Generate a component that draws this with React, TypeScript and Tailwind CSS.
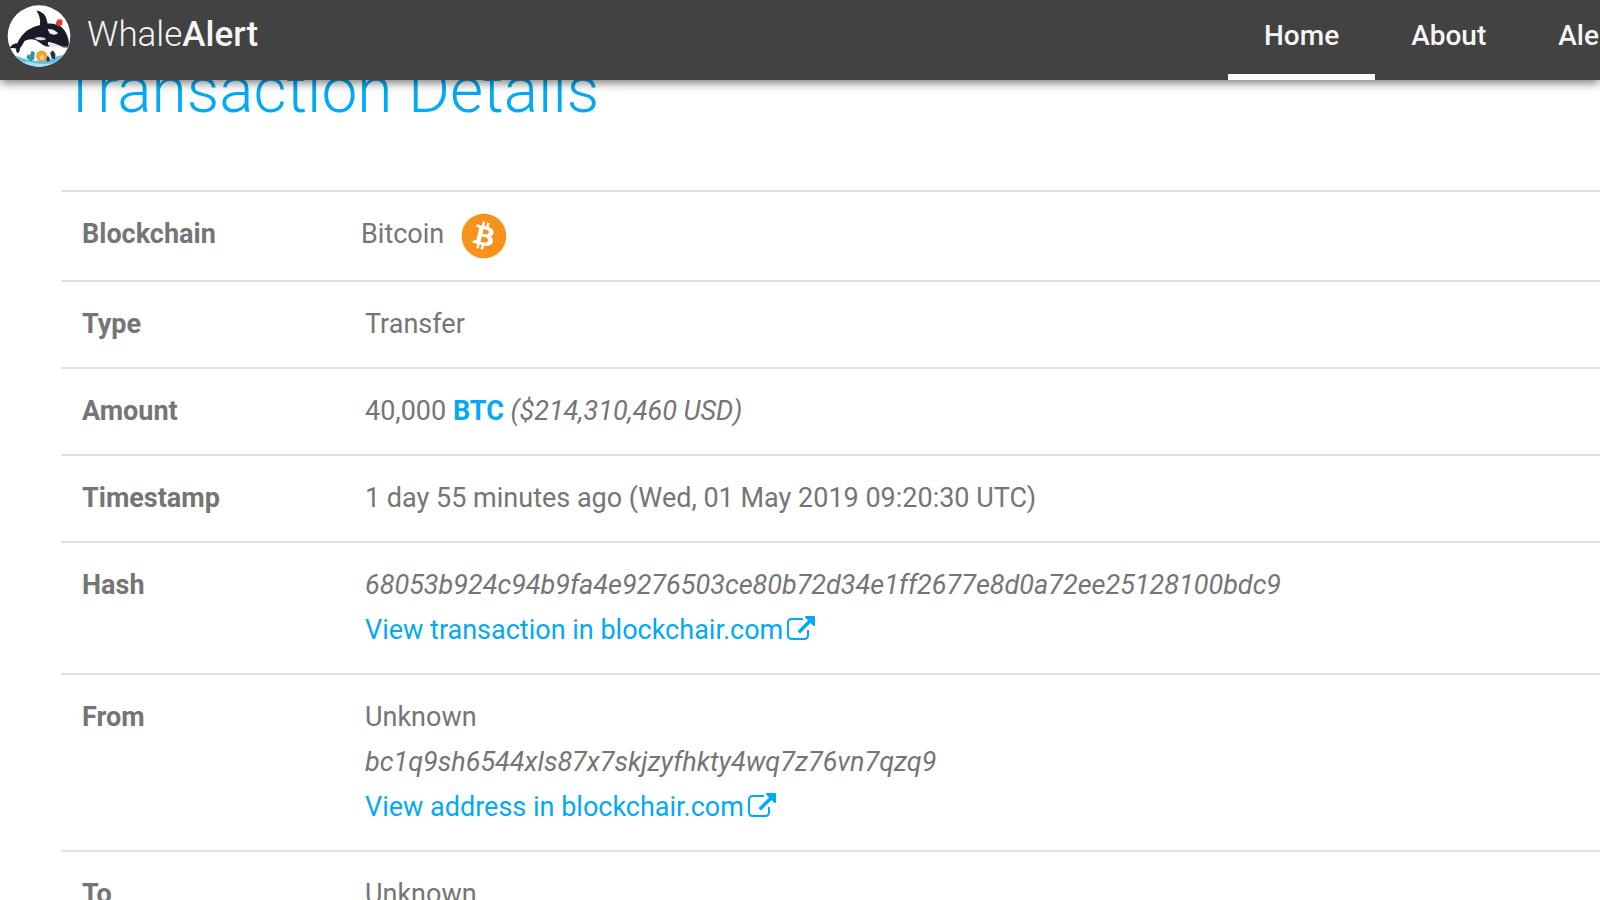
import type { ReactNode } from "react";
import { FaBitcoin } from "react-icons/fa";

function WhaleLogo() {
  return (
    <svg viewBox="22 15 192 188" className="h-[62px] w-16 shrink-0" aria-hidden="true">
      <defs>
        <clipPath id="disc">
          <ellipse cx="118" cy="109" rx="95" ry="93" />
        </clipPath>
      </defs>
      <g clipPath="url(#disc)">
        <rect x="20" y="10" width="200" height="200" fill="#fff" />
        <path d="M30 172Q50 166 66 176Q90 186 118 184Q150 182 168 172Q190 164 210 168V210H30Z" fill="#5fc3e8" />
        <path d="M60 190Q84 184 106 192Q140 198 180 188V210H60Z" fill="#a9e0f3" />
        <path d="M80 176L84 164L90 168L96 154L105 158L104 178L94 186Z" fill="#2d8fc4" />
        <path d="M88 170L98 166L100 176L90 180Z" fill="#3aa655" />
        <circle cx="126" cy="170" r="17" fill="#f7a030" />
        <circle cx="127" cy="174" r="7" fill="#fbd9a0" />
        <path d="M140 178L144 170L150 174V186H142ZM152 160L160 152L168 164L166 180L156 176Z" fill="#28323c" />
        <path
          d="M110 32Q130 36 138 50Q142 60 144 71Q168 69 186 82Q202 96 208 124Q210 138 204 144Q190 146 180 138Q162 130 146 127Q142 134 152 141Q134 142 122 130L108 121Q88 116 74 124Q68 138 60 146Q62 154 54 161Q47 158 49 148Q40 143 28 148Q33 133 52 131Q62 108 82 92Q102 80 121 76Q124 52 110 32Z"
          fill="#191c28"
        />
        <path d="M104 116Q122 108 140 117Q134 123 122 122Q112 122 104 116Z" fill="#d9dce4" />
        <path d="M147 127Q168 130 182 139Q168 147 152 141Q144 134 147 127Z" fill="#e4e6ec" />
        <path d="M144 88Q162 86 176 101Q164 110 150 101Z" fill="#f1f2f5" />
        <path d="M168 72L174 60Q182 56 190 62L188 76L176 80Z" fill="#e23a2c" />
        <path d="M182 138Q194 143 204 140L203 145Q192 148 182 138Z" fill="#c97c86" />
      </g>
    </svg>
  );
}

function ExternalIcon() {
  return (
    <svg viewBox="0 0 1792 1792" className="ml-1 inline-block size-7 align-[-5px]" fill="currentColor" aria-hidden="true">
      <path d="M1408 928v320q0 119-84.500 203.500t-203.500 84.500h-832q-119 0-203.500-84.500t-84.500-203.500v-832q0-119 84.500-203.500t203.500-84.500h704q14 0 23 9t9 23v64q0 14-9 23t-23 9h-704q-66 0-113 47t-47 113v832q0 66 47 113t113 47h832q66 0 113-47t47-113v-320q0-14 9-23t23-9h64q14 0 23 9t9 23zm384-864v512q0 26-19 45t-45 19-45-19l-176-176-652 652q-10 10-23 10t-23-10l-114-114q-10-10-10-23t10-23l652-652-176-176q-19-19-19-45t19-45 45-19h512q26 0 45 19t19 45z" />
    </svg>
  );
}

function ChainLink({ children }: { children: ReactNode }) {
  return (
    <a href="#blockchair" className="block text-[#03a9f4]">
      {children}
      <ExternalIcon />
    </a>
  );
}

function Row({ label, children }: { label: string; children: ReactNode }) {
  return (
    <tr className="border-t-2 border-[#e0e0e0] align-top">
      <th scope="row" className="w-[284px] py-5 pl-[21px] text-left font-bold">
        {label}
      </th>
      <td className="py-5 pl-5">{children}</td>
    </tr>
  );
}

const tabs = ["Home", "About", "Alerts"];

export default function App() {
  return (
    <div className="h-screen overflow-hidden bg-white font-[Roboto,sans-serif] text-[27px] leading-[45px] text-[#757575]">
      <header className="relative z-10 flex h-20 items-stretch bg-[#424242] text-[#f5f5f5] shadow-[0_2px_10px_rgba(0,0,0,0.6)]">
        <a href="#home" className="flex flex-1 items-center pb-2 pl-[7px] text-[35px]">
          <WhaleLogo />
          <span className="ml-4 pb-1 font-light">
            Whale<span className="font-medium">Alert</span>
          </span>
        </a>
        <nav className="flex w-[372px] overflow-hidden text-[28px] font-medium">
          {tabs.map((tab, i) => (
            <a
              key={tab}
              href={"#" + tab.toLowerCase()}
              className={
                i === 0
                  ? "flex shrink-0 items-center border-b-6 border-white px-9 pb-1"
                  : "flex shrink-0 items-center border-b-6 border-transparent px-9 pb-1"
              }
            >
              {tab}
            </a>
          ))}
        </nav>
      </header>
      <main className="pl-[61px]">
        <h1 className="-mt-7 pb-[60px] text-[64px] leading-[78px] font-light text-[#03a9f4]">Transaction Details</h1>
        <table className="w-full border-collapse">
          <tbody>
            <Row label="Blockchain">
              <span className="-ml-1 flex items-start">
                Bitcoin
                <span className="ml-4 flex size-12 items-center justify-center">
                  <FaBitcoin className="size-[46px] text-[#f7931a]" />
                </span>
              </span>
            </Row>
            <Row label="Type">Transfer</Row>
            <Row label="Amount">
              40,000{" "}
              <a href="#btc" className="font-bold text-[#03a9f4]">
                BTC
              </a>{" "}
              <em>($214,310,460 USD)</em>
            </Row>
            <Row label="Timestamp">1 day 55 minutes ago (Wed, 01 May 2019 09:20:30 UTC)</Row>
            <Row label="Hash">
              <em className="block">68053b924c94b9fa4e9276503ce80b72d34e1ff2677e8d0a72ee25128100bdc9</em>
              <ChainLink>View transaction in blockchair.com</ChainLink>
            </Row>
            <Row label="From">
              Unknown
              <em className="block">bc1q9sh6544xls87x7skjzyfhkty4wq7z76vn7qzq9</em>
              <ChainLink>View address in blockchair.com</ChainLink>
            </Row>
            <Row label="To">Unknown</Row>
          </tbody>
        </table>
      </main>
    </div>
  );
}
